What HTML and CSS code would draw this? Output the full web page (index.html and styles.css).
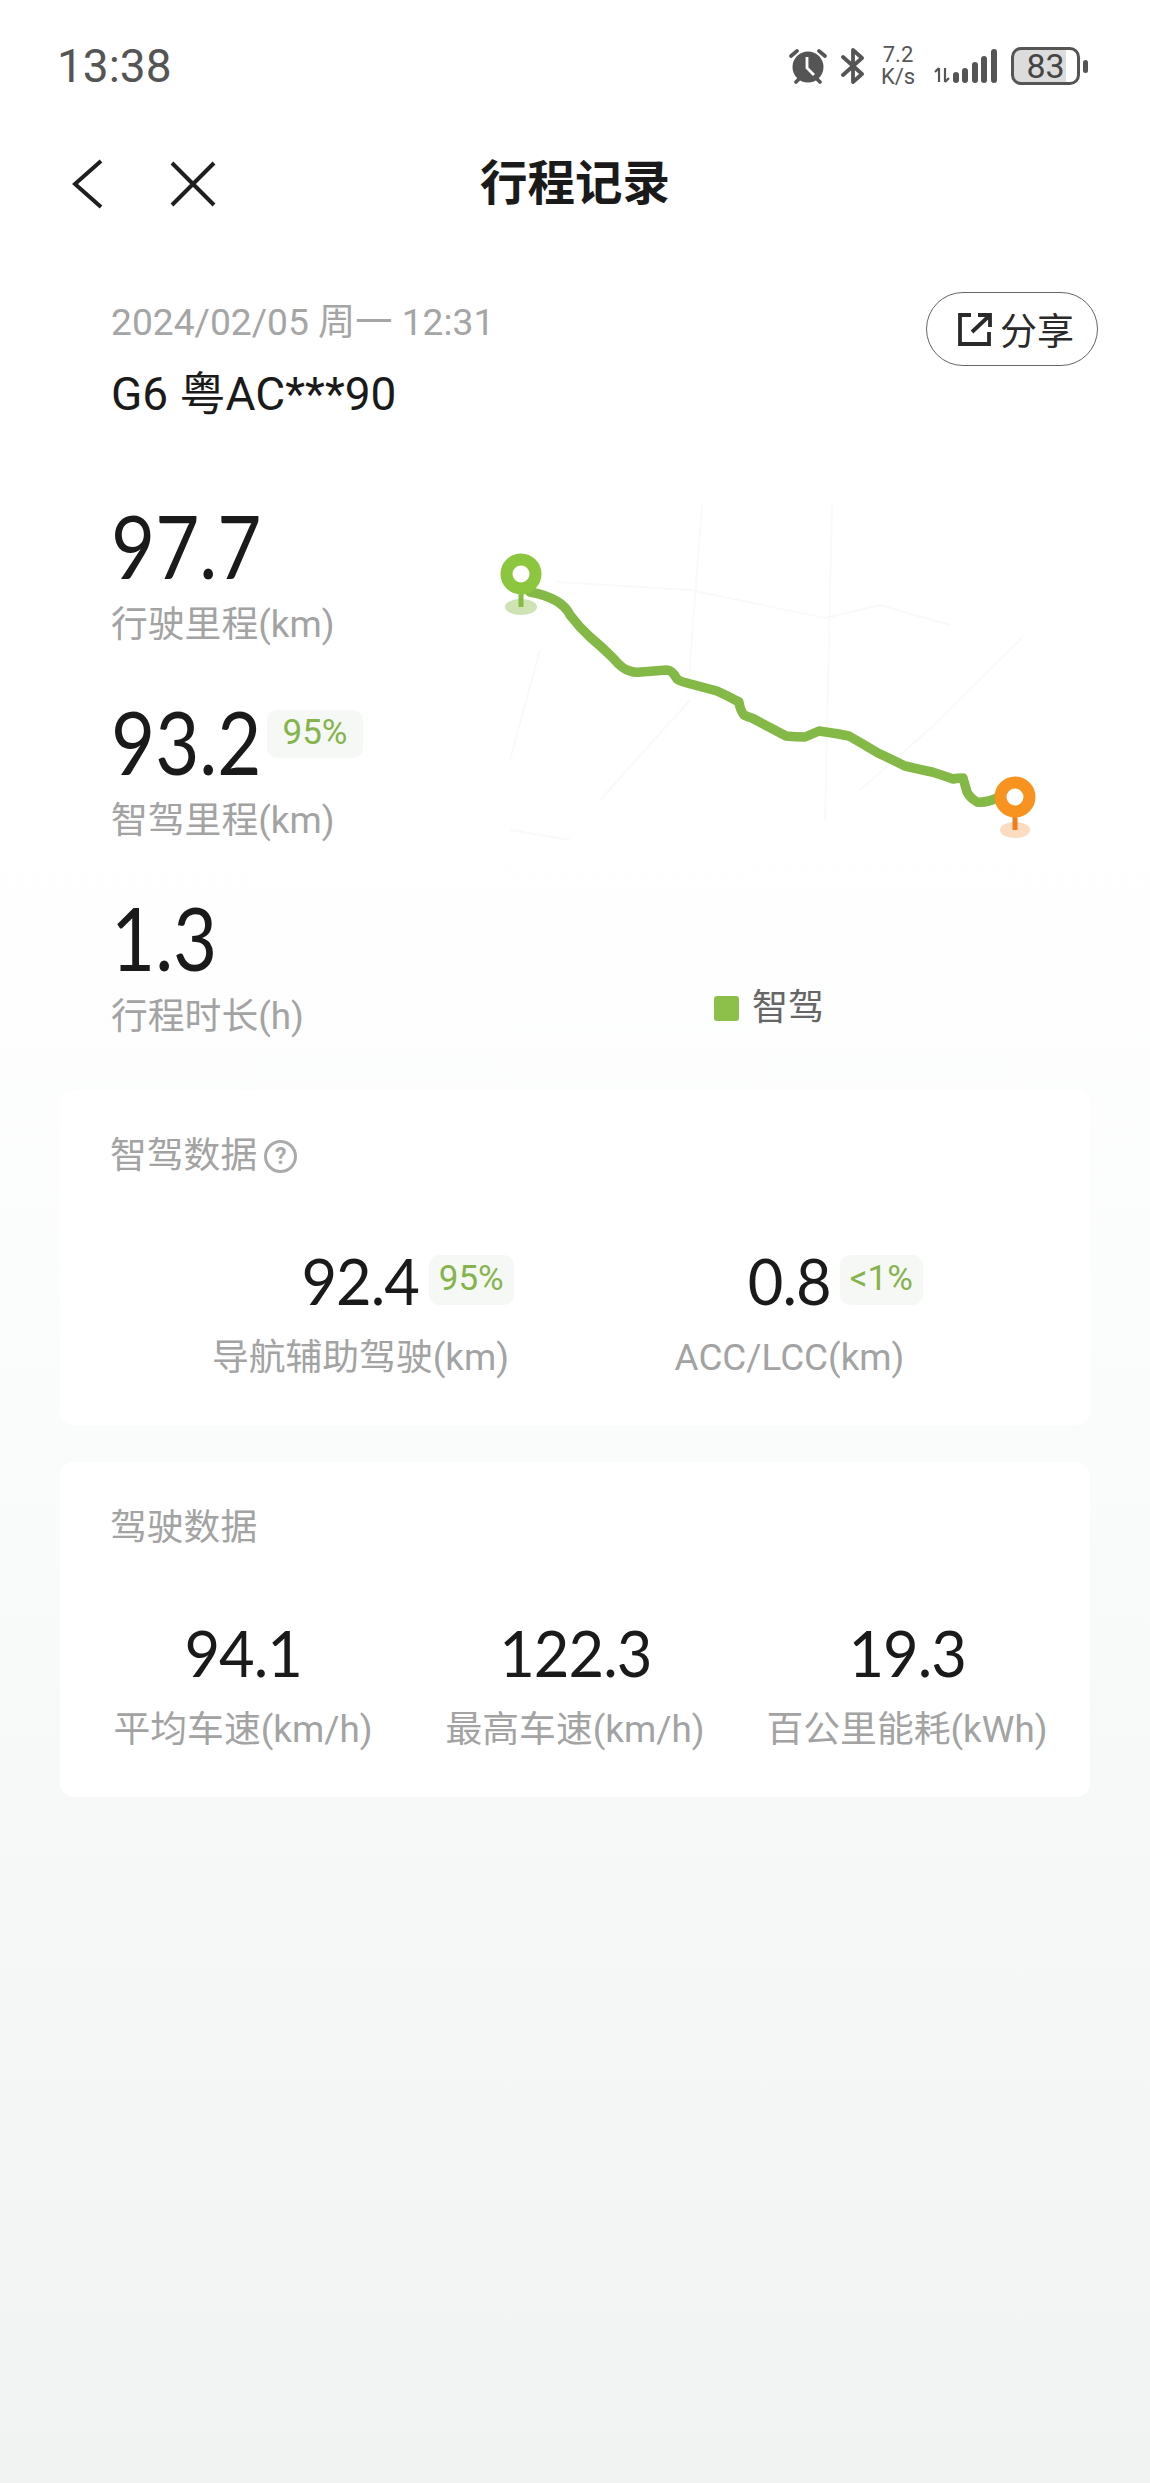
FILE: index.html
```html
<!DOCTYPE html>
<html lang="zh-CN">
<head>
  <meta charset="UTF-8">
  <meta name="viewport" content="width=device-width, initial-scale=1.0">
  <title>行程记录</title>
  <link rel="stylesheet" href="styles.css">
</head>
<body>
  <div class="statusbar">
    <span class="time">13:38</span>
    <div class="status-icons">
      <svg class="ic-alarm" width="38" height="36" viewBox="0 0 38 36">
        <circle cx="19" cy="19" r="15.5" fill="#555"/>
        <path d="M18 9v11l7 7" fill="none" stroke="#fff" stroke-width="2.8"/>
        <path d="M2 8l6-5M36 8l-6-5" fill="none" stroke="#555" stroke-width="3.6" stroke-linecap="round"/>
        <path d="M7 34l3-3M31 34l-3-3" fill="none" stroke="#555" stroke-width="3.6" stroke-linecap="round"/>
      </svg>
      <svg class="ic-bt" width="24" height="36" viewBox="0 0 24 36">
        <path d="M2 9l19 17-9 8V2l9 8L2 27" fill="none" stroke="#555" stroke-width="3.8" stroke-linejoin="round" stroke-linecap="round"/>
      </svg>
      <div class="speed"><span>7.2</span><span>K/s</span></div>
      <svg class="ic-signal" width="64" height="36" viewBox="0 0 64 36">
        <path d="M6 20v14M2 24l4-4M12 20v14M12 34l4-4" fill="none" stroke="#555" stroke-width="2.2"/>
        <g fill="#555">
          <rect x="20" y="24" width="6" height="11" rx="3"/>
          <rect x="29" y="20" width="6" height="15" rx="3"/>
          <rect x="39" y="14" width="6" height="21" rx="3"/>
          <rect x="48" y="8" width="6" height="27" rx="3"/>
          <rect x="58" y="1" width="6" height="34" rx="3"/>
        </g>
      </svg>
      <div class="battery"><div class="battery-body">83</div><div class="battery-nub"></div></div>
    </div>
  </div>

  <div class="nav">
    <div class="nav-left">
      <svg width="32" height="50" viewBox="0 0 32 50">
        <path d="M29 2L3 25l26 23" fill="none" stroke="#1f1f1f" stroke-width="4"/>
      </svg>
      <svg width="46" height="46" viewBox="0 0 46 46">
        <path d="M2 2l42 42M44 2L2 44" fill="none" stroke="#1f1f1f" stroke-width="4"/>
      </svg>
    </div>
    <h1 class="title">行程记录</h1>
  </div>

  <div class="trip-head">
    <div>
      <div class="trip-date">2024/02/05 周一 12:31</div>
      <div class="trip-plate">G6 粤AC***90</div>
    </div>
    <button class="share">
      <svg width="34" height="34" viewBox="0 0 34 34">
        <path d="M13 3H2v29h29V20" fill="none" stroke="#2a2a2a" stroke-width="3.8"/>
        <path d="M14 20L31 4M20 3h12v12" fill="none" stroke="#2a2a2a" stroke-width="3.8"/>
      </svg>
      <span>分享</span>
    </button>
  </div>

  <div class="overview">
    <div class="stats">
      <div class="stat">
        <div class="big-num">97.7</div>
        <div class="label">行驶里程(km)</div>
      </div>
      <div class="stat">
        <div class="big-row">
          <div class="big-num">93.2</div>
          <span class="pct pct-big">95%</span>
        </div>
        <div class="label">智驾里程(km)</div>
      </div>
      <div class="stat">
        <div class="big-num">1.3</div>
        <div class="label">行程时长(h)</div>
      </div>
    </div>
    <div class="map">
      <svg width="600" height="470" viewBox="0 -15 600 470">
        <g fill="none" stroke="#f8faf9" stroke-width="2">
          <path d="M222 -15L208 170M352 -15L345 300M77 62L210 70L345 98L400 85L470 105"/>
          <path d="M210 180L120 280M60 130L30 240M543 117L452 207L380 270M30 310L90 320"/>
        </g>
        <path class="route" d="M50 72Q82 78 90 95Q99 107 110 117Q122 127 133 138Q143 150 150 151Q155 153 161 152L187 150Q192 150 197 159Q199 161 207 163Q222 167 237 171Q248 176 259 182Q260 190 264 195Q268 197 272 198Q289 207 306 216Q315 217 325 217Q332 214 339 211Q354 213 369 216Q383 224 398 233Q411 239 425 246Q438 249 452 252Q462 255 473 259Q478 258 483 258Q485 265 487 272Q490 278 497 282Q507 283 517 278"/>
        <ellipse cx="41" cy="87" rx="16" ry="8" fill="#cfe3b5"/>
        <path d="M41 70v17" stroke="#86bd3f" stroke-width="5"/>
        <circle cx="41" cy="54" r="14.5" fill="#fff" stroke="#8cc63f" stroke-width="12"/>
        <ellipse cx="535" cy="310" rx="15" ry="8" fill="#fbdcc0"/>
        <path d="M535 294v16" stroke="#ee7d1a" stroke-width="5"/>
        <circle cx="535" cy="277" r="14.5" fill="#fff" stroke="#f7931e" stroke-width="12"/>
      </svg>
      <div class="legend"><i class="legend-dot"></i><span>智驾</span></div>
    </div>
  </div>

  <section class="card">
    <div class="card-title">智驾数据<span class="help">?</span></div>
    <div class="cols cols-2">
      <div class="col">
        <div class="num-wrap">
          <span class="num">92.4</span>
          <span class="pct">95%</span>
        </div>
        <div class="label">导航辅助驾驶(km)</div>
      </div>
      <div class="col">
        <div class="num-wrap">
          <span class="num">0.8</span>
          <span class="pct">&lt;1%</span>
        </div>
        <div class="label">ACC/LCC(km)</div>
      </div>
    </div>
  </section>

  <section class="card">
    <div class="card-title">驾驶数据</div>
    <div class="cols cols-3">
      <div class="col">
        <div class="num-wrap"><span class="num">94.1</span></div>
        <div class="label">平均车速(km/h)</div>
      </div>
      <div class="col">
        <div class="num-wrap"><span class="num">122.3</span></div>
        <div class="label">最高车速(km/h)</div>
      </div>
      <div class="col">
        <div class="num-wrap"><span class="num">19.3</span></div>
        <div class="label">百公里能耗(kWh)</div>
      </div>
    </div>
  </section>
</body>
</html>
```

FILE: styles.css
```css
html, body {
  margin: 0;
  padding: 0;
}

body {
  width: 1150px;
  height: 2483px;
  overflow: hidden;
  font-family: Roboto, "Noto Sans CJK SC", sans-serif;
  background: linear-gradient(#fff 0, #fff 32%, #fafbfb 58%, #f1f3f3 100%);
  color: #1a1a1a;
}

/* status bar */
.statusbar {
  height: 132px;
  display: flex;
  align-items: center;
  justify-content: space-between;
  padding: 0 62px 0 57px;
}

.time {
  font-size: 46px;
  color: #555;
}

.status-icons {
  display: flex;
  align-items: center;
}

.ic-bt {
  margin-left: 14px;
}

.speed {
  display: flex;
  flex-direction: column;
  margin-left: 15px;
  width: 36px;
  align-items: center;
  font-size: 22px;
  line-height: 22px;
  color: #555;
}

.ic-signal {
  margin-left: 17px;
}

.battery {
  display: flex;
  align-items: center;
  margin-left: 14px;
}

.battery-body {
  width: 63px;
  height: 32px;
  border: 3px solid #555;
  border-radius: 10px;
  background: linear-gradient(90deg, #dcdcdc 83%, #fff 83%);
  font-size: 34px;
  line-height: 32px;
  text-align: center;
  color: #444;
}

.battery-nub {
  width: 5px;
  height: 13px;
  margin-left: 3px;
  border-radius: 3px;
  background: #555;
}

/* nav */
.nav {
  position: relative;
  height: 100px;
  display: flex;
  align-items: center;
  justify-content: center;
}

.nav-left {
  position: absolute;
  left: 72px;
  top: 27px;
  display: flex;
  align-items: center;
  gap: 66px;
}

.title {
  margin: -6px 0 0;
  font-size: 47.5px;
  font-weight: 700;
  color: #1a1a1a;
}

/* trip */
.trip-head {
  display: flex;
  justify-content: space-between;
  align-items: flex-start;
  padding: 60px 52px 0 111px;
}

.trip-date {
  margin-top: 5px;
  font-size: 37.2px;
  line-height: 50px;
  color: #a5a5a5;
}

.trip-plate {
  margin-top: 22px;
  font-size: 46px;
  line-height: 50px;
}

.share {
  width: 172px;
  height: 74px;
  display: flex;
  align-items: center;
  justify-content: center;
  gap: 8px;
  padding: 0 0 0 8px;
  background: #fff;
  border: 1.5px solid #666;
  border-radius: 37px;
  font-family: inherit;
  font-size: 37px;
  color: #2a2a2a;
}

.overview {
  display: flex;
  margin-top: 86px;
  padding-left: 111px;
}

.stats {
  width: 369px;
  display: flex;
  flex-direction: column;
  gap: 54px;
}

.big-row {
  display: flex;
  align-items: flex-start;
}

.big-num {
  width: 150px;
  font-family: Lato, Roboto, sans-serif;
  font-size: 88px;
  line-height: 80px;
  color: #1a1a1a;
  transform: scaleX(0.865);
  transform-origin: left center;
}

.label {
  margin-top: 18px;
  font-size: 36.8px;
  line-height: 44px;
  color: #a3a3a3;
  white-space: nowrap;
}

.pct {
  position: absolute;
  left: 100%;
  top: 14px;
  margin-left: 7px;
  padding: 0 10px;
  height: 50px;
  font-family: Roboto, sans-serif;
  font-size: 35px;
  line-height: 48px;
  color: #85b44d;
  background: #f6f8f6;
  border-radius: 10px;
}

.pct-big {
  position: static;
  margin: 9px 0 0 6px;
  width: 96px;
  height: 48px;
  padding: 0;
  line-height: 46px;
  text-align: center;
}

.map {
  width: 600px;
}

.map svg {
  display: block;
}

.route {
  fill: none;
  stroke: #84b847;
  stroke-width: 9.5;
  stroke-linecap: round;
  stroke-linejoin: round;
}

.legend {
  display: flex;
  align-items: center;
  gap: 13px;
  margin: 11px 0 0 234px;
  font-size: 36px;
  line-height: 44px;
  color: #666;
}

.legend-dot {
  width: 25px;
  height: 25px;
  border-radius: 3px;
  background: #8cc04a;
}

/* data cards */
.card {
  width: 1030px;
  margin: 37px 0 0 60px;
  padding: 41px 0 45px;
  background: #fff;
  border-radius: 14px;
}

.overview + .card {
  margin-top: 51px;
}

.card-title {
  display: flex;
  align-items: center;
  gap: 7px;
  padding-left: 50px;
  font-size: 36.8px;
  line-height: 50px;
  color: #a3a3a3;
}

.help {
  width: 27px;
  height: 27px;
  border: 3px solid #aaa;
  border-radius: 50%;
  font-size: 23px;
  font-weight: 700;
  line-height: 27px;
  text-align: center;
  color: #aaa;
}

.cols {
  display: grid;
  margin-top: 60px;
}

.cols-2 {
  grid-template-columns: 429px 429px;
  padding-left: 86px;
}

.cols-3 {
  grid-template-columns: repeat(3, 332px);
  padding-left: 17px;
}

.col {
  text-align: center;
}

.num-wrap {
  position: relative;
  display: inline-block;
}

.num {
  display: block;
  font-family: Lato, Roboto, sans-serif;
  font-size: 64px;
  line-height: 80px;
  letter-spacing: -1px;
  color: #1a1a1a;
  transform: scaleX(0.96);
}

.col .label {
  margin-top: 15px;
}
```
